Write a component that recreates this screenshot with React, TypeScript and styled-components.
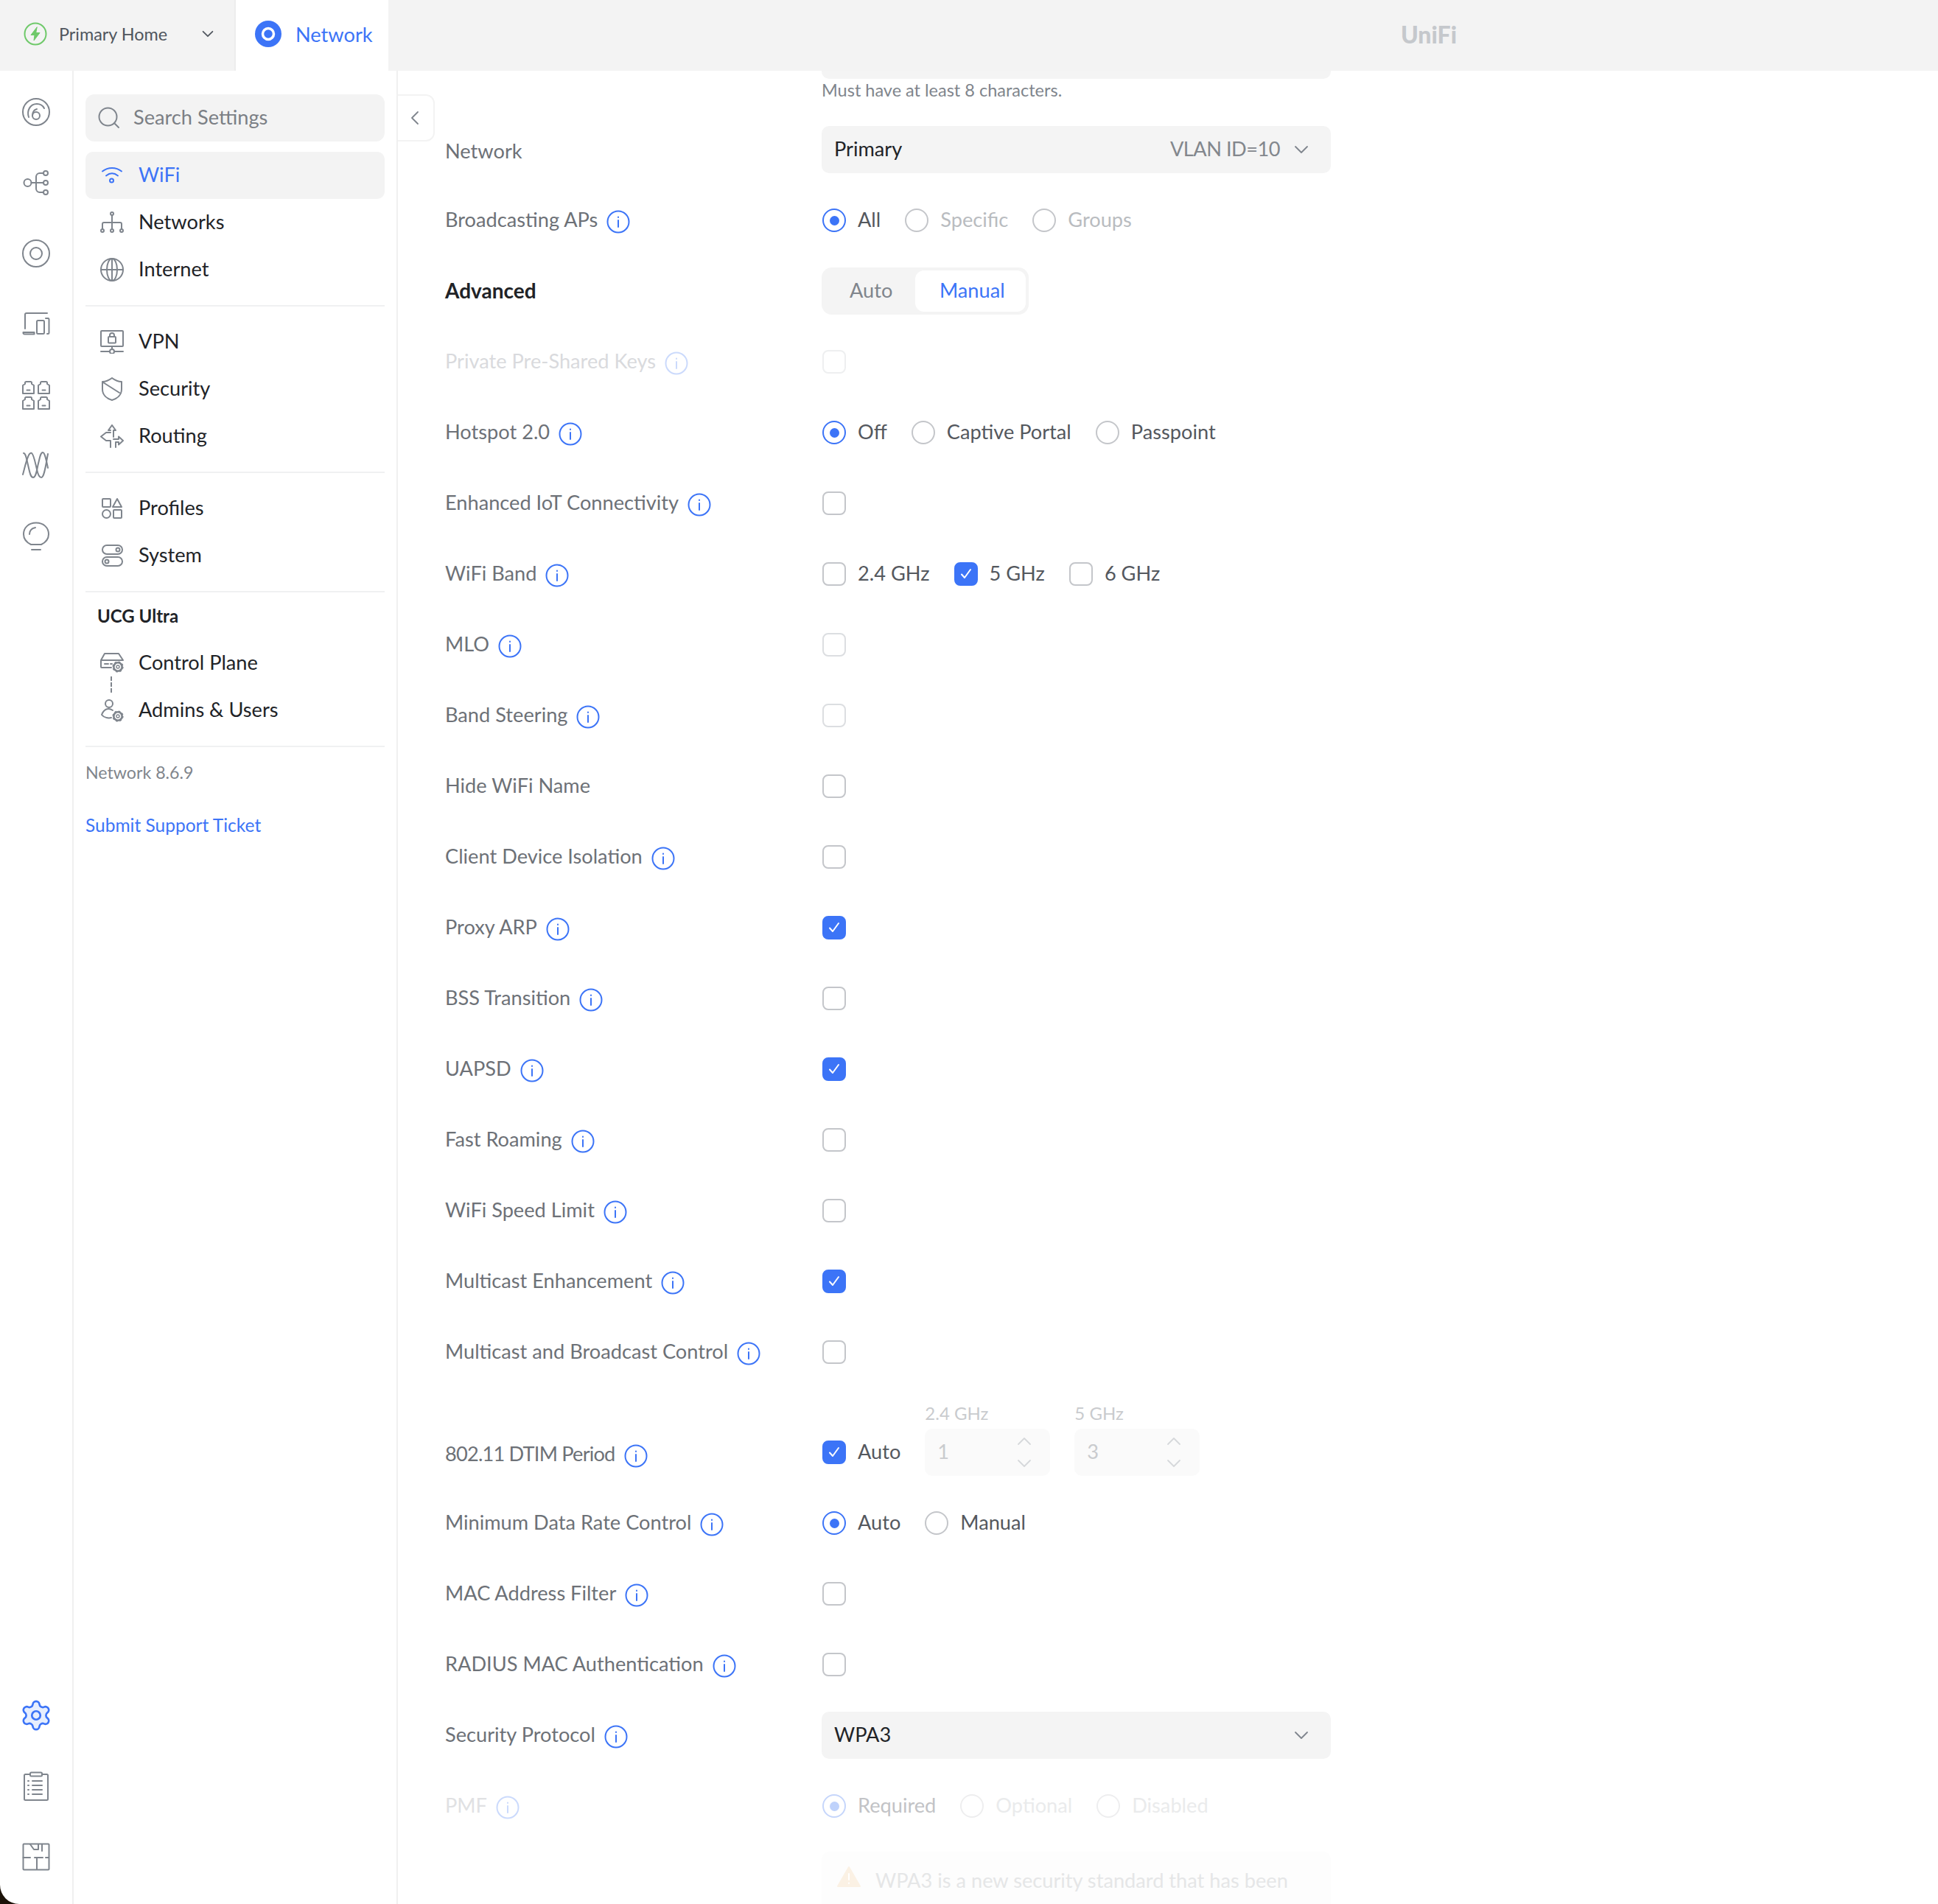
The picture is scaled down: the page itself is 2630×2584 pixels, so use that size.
import React from "react";
import styled, { createGlobalStyle, css } from "styled-components";
import { Settings } from "lucide-react";

const BLUE = "#3c74f7";
const ICON = "#7f858d";
const INK = "#212327";

const GlobalStyle = createGlobalStyle`
  html, body { margin: 0; padding: 0; background: #1c1208; }
  * { box-sizing: border-box; }
  body { font-family: Lato, "Liberation Sans", sans-serif; font-size: 27.2px; color: ${INK}; }
`;

const Page = styled.div`
  width: 2630px;
  height: 2584px;
  background: #fff;
  border-bottom-left-radius: 26px;
  overflow: hidden;
  display: flex;
  flex-direction: column;
`;

const TopBar = styled.header`
  height: 96px;
  flex: none;
  display: flex;
  align-items: stretch;
  background: #f3f3f3;
`;

const SiteTab = styled.div`
  width: 320px;
  display: flex;
  align-items: center;
  gap: 16px;
  padding: 0 28px 4px 32px;
  font-size: 23.4px;
  color: #50565e;
  border-right: 2px solid #ededed;
`;

const AppTab = styled.div`
  width: 207px;
  display: flex;
  align-items: center;
  gap: 19px;
  padding: 0 0 4px 26px;
  background: #fff;
  color: ${BLUE};
`;

const Logo = styled.div`
  margin-left: 1374px;
  align-self: center;
  padding-bottom: 4px;
  font-size: 32px;
  font-weight: 900;
  color: #c5c8cc;
`;

const Body = styled.div`
  flex: 1;
  min-height: 0;
  display: flex;
`;

const Rail = styled.nav`
  width: 100px;
  flex: none;
  display: flex;
  flex-direction: column;
  justify-content: space-between;
  padding: 8px 0 16px;
  border-right: 2px solid #f0f0f0;
`;

const RailButton = styled.div`
  height: 96px;
  display: flex;
  align-items: center;
  justify-content: center;
`;

const Sidebar = styled.aside`
  width: 440px;
  flex: none;
  padding: 32px 16px 0;
  border-right: 2px solid #f0f0f0;
`;

const SearchBox = styled.div`
  height: 64px;
  margin-bottom: 14px;
  display: flex;
  align-items: center;
  gap: 18px;
  padding-left: 17px;
  border-radius: 12px;
  background: #f3f3f3;
  color: #7b7f85;
`;

const NavItem = styled.div<{ $active?: boolean }>`
  position: relative;
  height: 64px;
  display: flex;
  align-items: center;
  gap: 20px;
  padding-left: 20px;
  border-radius: 10px;
  ${(p) =>
    p.$active &&
    css`
      background: #f3f3f3;
      color: ${BLUE};
    `}
`;

const NavText = styled.span`
  margin-top: -3px;
`;

const LinkedItem = styled(NavItem)`
  &::after {
    content: "";
    position: absolute;
    left: 34px;
    top: 50px;
    height: 22px;
    border-left: 2px dashed ${ICON};
  }
`;

const NavDivider = styled.div`
  height: 2px;
  margin: 16px 0;
  background: #f0f1f2;
`;

const NavHeading = styled.div`
  height: 64px;
  margin-top: -16px;
  padding: 0 0 2px 16px;
  display: flex;
  align-items: center;
  font-size: 24px;
  font-weight: 700;
`;

const Version = styled.div`
  margin-top: 18px;
  line-height: 32px;
  font-size: 23.2px;
  color: #80858c;
`;

const SupportLink = styled.a`
  display: block;
  margin-top: 40px;
  line-height: 32px;
  font-size: 24.5px;
  color: ${BLUE};
`;

const Main = styled.main`
  position: relative;
  flex: 1;
  min-width: 0;
  padding-left: 64px;
  overflow: hidden;
`;

const CollapseTab = styled.div`
  position: absolute;
  left: -2px;
  top: 32px;
  width: 52px;
  height: 64px;
  display: flex;
  align-items: center;
  justify-content: center;
  background: #fff;
  border: 2px solid #f3f3f3;
  border-left: 0;
  border-radius: 0 12px 12px 0;
  color: ${ICON};
`;

const PasswordEnd = styled.div`
  width: 691px;
  height: 11px;
  margin-left: 511px;
  background: #f4f4f4;
  border-radius: 0 0 10px 10px;
`;

const Hint = styled.div`
  height: 48px;
  margin-left: 511px;
  line-height: 30px;
  font-size: 23.5px;
  color: #80858c;
`;

type Tone = "normal" | "strong" | "muted" | "faint";

const toneColor: Record<Tone, string> = {
  normal: "#6d7177",
  strong: INK,
  muted: "#d9dadd",
  faint: "#e0e1e3",
};

const Row = styled.div<{ $tall?: boolean }>`
  display: flex;
  align-items: ${(p) => (p.$tall ? "flex-end" : "center")};
  height: ${(p) => (p.$tall ? 136 : 96)}px;
  padding-bottom: ${(p) => (p.$tall ? 16 : 0)}px;
`;

const LabelCell = styled.div<{ $tone?: Tone; $low?: boolean; $tight?: boolean }>`
  width: 511px;
  flex: none;
  display: flex;
  align-items: center;
  gap: 12px;
  height: 64px;
  padding: ${(p) => (p.$low ? "3px 0 0" : "0 0 3px")};
  color: ${(p) => toneColor[p.$tone || "normal"]};
  font-size: ${(p) => (p.$tone === "strong" ? 28 : 27.2)}px;
  font-weight: ${(p) => (p.$tone === "strong" ? 700 : 400)};
  letter-spacing: ${(p) => (p.$tight ? "-0.8px" : "normal")};
`;

const InfoMark = styled.svg<{ $faded?: boolean }>`
  width: 32px;
  height: 32px;
  margin-top: 7px;
  flex: none;
  fill: none;
  stroke: ${(p) => (p.$faded ? "#cbdafc" : BLUE)};
  stroke-width: 2;
  stroke-linecap: round;
`;

const ChoiceGroup = styled.div`
  display: flex;
  align-items: center;
  gap: 32px;
  height: 64px;
`;

const Choice = styled.label`
  display: flex;
  align-items: center;
  gap: 16px;
`;

const ChoiceText = styled.span<{ $color?: string }>`
  margin-top: -3px;
  color: ${(p) => p.$color || "#54585e"};
`;

const Radio = styled.span<{ $on?: boolean; $border?: string; $dot?: string }>`
  width: 32px;
  height: 32px;
  margin-left: 1px;
  flex: none;
  display: flex;
  align-items: center;
  justify-content: center;
  border-radius: 50%;
  border: 2px solid ${(p) => p.$border || (p.$on ? BLUE : "#c4c6ca")};
  ${(p) =>
    p.$on &&
    css`
      &::after {
        content: "";
        width: 13px;
        height: 13px;
        border-radius: 50%;
        background: ${p.$dot || BLUE};
      }
    `}
`;

const Box = styled.span<{ $on?: boolean; $border?: string }>`
  width: 32px;
  height: 32px;
  margin-left: 1px;
  flex: none;
  display: flex;
  align-items: center;
  justify-content: center;
  border-radius: 8px;
  border: 2px solid ${(p) => (p.$on ? BLUE : p.$border || "#c4c6ca")};
  background: ${(p) => (p.$on ? BLUE : "transparent")};
  color: #fff;
`;

const SelectBox = styled.div`
  width: 691px;
  height: 64px;
  display: flex;
  align-items: center;
  padding: 0 30px 0 17px;
  border-radius: 10px;
  background: #f4f4f4;
`;

const SelectText = styled.span`
  margin-top: -3px;
`;

const SelectHint = styled.span`
  margin: -3px 19px 0 auto;
  letter-spacing: -0.5px;
  color: #83878d;
`;

const Caret = styled.svg<{ $up?: boolean; $color?: string; $push?: boolean; $small?: boolean }>`
  width: ${(p) => (p.$small ? 16 : 20)}px;
  height: ${(p) => (p.$small ? 10 : 12)}px;
  flex: none;
  fill: none;
  stroke: ${(p) => p.$color || ICON};
  stroke-width: ${(p) => (p.$small ? 2.2 : 1.8)};
  stroke-linecap: round;
  stroke-linejoin: round;
  ${(p) => p.$up && "transform: rotate(180deg);"}
  ${(p) => p.$push && "margin-left: auto;"}
`;

const BackCaret = styled(Caret)`
  transform: rotate(90deg);
`;

const Segmented = styled.div`
  width: 281px;
  height: 64px;
  display: flex;
  padding: 4px;
  border-radius: 14px;
  background: #f4f4f4;
`;

const SegmentOff = styled.div`
  width: 123px;
  display: flex;
  align-items: center;
  padding: 0 0 3px 34px;
  color: #80858c;
`;

const SegmentOn = styled.div`
  width: 150px;
  display: flex;
  align-items: center;
  padding: 0 0 3px 33px;
  border-radius: 12px;
  background: #fff;
  color: ${BLUE};
`;

const StepperColumn = styled.div`
  position: relative;
  width: 170px;
  height: 64px;
  margin-left: 1px;
`;

const StepperLabel = styled.div`
  position: absolute;
  left: 0;
  top: -37px;
  font-size: 24px;
  line-height: 32px;
  color: #c9cbce;
`;

const Stepper = styled.div`
  height: 64px;
  display: flex;
  align-items: center;
  justify-content: space-between;
  padding: 0 25px 3px 17px;
  border-radius: 10px;
  background: #fafafa;
  color: #c9cbce;
`;

const StepperArrows = styled.div`
  display: flex;
  flex-direction: column;
  gap: 18px;
  margin-top: 3px;
`;

const WarningBox = styled.div`
  width: 691px;
  margin: 14px 0 0 511px;
  display: flex;
  gap: 19px;
  padding: 17px 18px 0 20px;
  background: #fdfdfd;
  border-radius: 10px;
  line-height: 44px;
  color: #e5e6e7;
`;

const Glyph = styled.svg<{ $size: number; $color?: string }>`
  width: ${(p) => p.$size}px;
  height: ${(p) => p.$size}px;
  flex: none;
  fill: none;
  stroke: ${(p) => p.$color || ICON};
  stroke-width: 2;
  stroke-linecap: round;
  stroke-linejoin: round;
`;

const Down = (p: { color?: string; push?: boolean; small?: boolean }) => (
  <Caret viewBox="0 0 20 12" $color={p.color} $push={p.push} $small={p.small}>
    <path d="M2 2l8 8 8-8" />
  </Caret>
);

const Info = ({ faded }: { faded?: boolean }) => (
  <InfoMark viewBox="0 0 32 32" $faded={faded}>
    <circle cx="16" cy="16" r="14.5" />
    <path d="M16 14v9M16 9.5v.4" />
  </InfoMark>
);

const Tick = () => (
  <Glyph viewBox="0 0 20 20" $size={20} $color="#fff">
    <path d="M4 10.500l4 4.500 8-11" />
  </Glyph>
);

const SmallGear = ({ x, y }: { x: number; y: number }) => (
  <g transform={`translate(${x} ${y})`}>
    <circle r="6" fill="#fff" />
    <circle r="6.400" strokeWidth="2.400" strokeDasharray="2.500 2.500" strokeLinecap="butt" />
    <circle r="5" strokeWidth="1.200" />
    <circle r="2" strokeWidth="1.400" />
  </g>
);

const PortCell = ({ x, y }: { x: number; y: number }) => (
  <g transform={`translate(${x} ${y})`}>
    <path d="M1 17V6l3-2V2.500a1.500 1.500 0 0 1 1.500-1.500h6A1.500 1.500 0 0 1 13 2.500V4l3 2v11z" />
    <path d="M6.500 12.500h4" />
  </g>
);

const railTop = [
  <Glyph key="dash" viewBox="0 0 40 40" $size={40}>
    <circle cx="20" cy="20" r="18" />
    <path d="M10 27c-3-9 2-18 11-18 4 0 8 2 10 6" />
    <circle cx="20" cy="25" r="5" />
    <path d="M15 25c0-5 2-8 6-9" />
  </Glyph>,
  <Glyph key="topo" viewBox="0 0 40 40" $size={40}>
    <circle cx="8.500" cy="20" r="5" />
    <path d="M13.500 20H30M30 7h-5a5 5 0 0 0-5 5v16a5 5 0 0 0 5 5h5" />
    <circle cx="33" cy="7" r="3" />
    <circle cx="33" cy="20" r="3" />
    <circle cx="33" cy="33" r="3" />
  </Glyph>,
  <Glyph key="device" viewBox="0 0 40 40" $size={40}>
    <circle cx="20" cy="20" r="18" />
    <circle cx="20" cy="20" r="8" />
  </Glyph>,
  <Glyph key="clients" viewBox="0 0 40 40" $size={40}>
    <path d="M5 26V7a2 2 0 0 1 2-2h28" />
    <path d="M2.500 31h15v2.500h-13a2 2 0 0 1-2-2.500z" />
    <rect x="21" y="15" width="10" height="18" rx="1.500" />
    <path d="M33 12h3.500a1.500 1.500 0 0 1 1 1.500V31.500a1.500 1.500 0 0 1-1.500 1.500h-1" />
  </Glyph>,
  <Glyph key="ports" viewBox="0 0 40 40" $size={40}>
    <PortCell x={1} y={1} />
    <PortCell x={22} y={1} />
    <PortCell x={1} y={22} />
    <PortCell x={22} y={22} />
  </Glyph>,
  <Glyph key="waves" viewBox="0 0 40 40" $size={40}>
    <path d="M3 3c3 0 4 8 6 16s3 17 7 17 5-11 7-19 3-15 6-15 5 12 7 21" />
    <path d="M2 32c2-7 4-17 7-24 1-3 3-6 5-5 3 2 5 14 7 22 1 5 3 11 6 11 4 0 6-16 9-32" />
  </Glyph>,
  <Glyph key="bulb" viewBox="0 0 40 40" $size={40}>
    <path d="M13 31C7 28 3 23 3 17 3 8 10 1.500 20 1.500S37 8 37 17c0 6-4 11-10 14z" />
    <path d="M14 38h12M11 17c0-5 3-8 8-9" />
  </Glyph>,
];

const railBottom = [
  <Settings key="gear" size={46} color={BLUE} fill="#e6eefe" strokeWidth={1.4} />,
  <Glyph key="log" viewBox="0 0 40 40" $size={40}>
    <rect x="4" y="4" width="32" height="35" rx="1.500" />
    <rect x="12" y="1.500" width="16" height="5" rx="1.500" fill="#fff" />
    <path d="M15 13h13M15 19h13M15 25h13M15 31h13M9 13h1M9 19h1M9 25h1M9 31h1" />
  </Glyph>,
  <Glyph key="plan" viewBox="0 0 40 40" $size={40}>
    <rect x="2.500" y="2.500" width="35" height="35" rx="1" />
    <path d="M12 3l5 7h6V3M28 3v9M2.500 21H12M18 21h11M21 21v16M33 21h4" />
  </Glyph>,
];

const navIcons: Record<string, React.ReactNode> = {
  wifi: (
    <Glyph viewBox="0 0 32 32" $size={32} $color={BLUE}>
      <path d="M3 10.500c7.500-6 18.500-6 26 0M8 16.500c5-4 11-4 16 0" />
      <circle cx="15.500" cy="23" r="2.500" />
    </Glyph>
  ),
  networks: (
    <Glyph viewBox="0 0 32 32" $size={32}>
      <circle cx="16" cy="4" r="2" />
      <circle cx="3" cy="27" r="2" />
      <circle cx="16" cy="27" r="2" />
      <circle cx="29" cy="27" r="2" />
      <path d="M16 6v19M3 25v-7a2 2 0 0 1 2-2h22a2 2 0 0 1 2 2v7" />
    </Glyph>
  ),
  globe: (
    <Glyph viewBox="0 0 32 32" $size={32}>
      <circle cx="16" cy="16" r="15" />
      <ellipse cx="16" cy="16" rx="7" ry="15" />
      <path d="M1 16h30M16 1v30" />
    </Glyph>
  ),
  vpn: (
    <Glyph viewBox="0 0 32 32" $size={32}>
      <rect x="1" y="1" width="30" height="21" rx="1" />
      <rect x="11" y="9" width="10" height="8.500" rx="1" />
      <path d="M13 9V7a3 3 0 0 1 6 0v2M1 29h12M19 29h12M16 22v4" />
      <circle cx="16" cy="29" r="3" />
    </Glyph>
  ),
  shield: (
    <Glyph viewBox="0 0 32 32" $size={32}>
      <path d="M3 6c5 0 9-2 13-5 4 3 8 5 13 5v10c0 8-6 13-13 15C9 29 3 24 3 16z" />
      <path d="M4 7l22 14" />
    </Glyph>
  ),
  routing: (
    <Glyph viewBox="0 0 32 32" $size={32}>
      <path d="M11 8l5-7 5 7h-3v9M14 8h-3M14 11H8l-7 5.500L8 22h6v9M18 20h7v-3.500l6 5.500-6 5.500V24h-4v7" />
    </Glyph>
  ),
  profiles: (
    <Glyph viewBox="0 0 32 32" $size={32}>
      <rect x="3" y="3" width="11" height="11" rx="1" />
      <path d="M23 3l6 11H17z" />
      <circle cx="8.500" cy="23.500" r="5.500" />
      <rect x="18" y="18" width="11" height="11" rx="1" />
    </Glyph>
  ),
  system: (
    <Glyph viewBox="0 0 32 32" $size={32}>
      <rect x="3" y="2" width="27" height="12" rx="6" />
      <rect x="3" y="18" width="27" height="12" rx="6" />
      <circle cx="24" cy="8" r="2.500" />
      <circle cx="9" cy="24" r="2.500" />
    </Glyph>
  ),
  plane: (
    <Glyph viewBox="0 0 32 32" $size={32}>
      <path d="M1 12l5-9h19l6 9M15 22H2a1 1 0 0 1-1-1v-9h30" />
      <path d="M6 17h5M14 17h2" />
      <SmallGear x={24} y={21} />
    </Glyph>
  ),
  admins: (
    <Glyph viewBox="0 0 32 32" $size={32}>
      <circle cx="12" cy="7" r="5" />
      <path d="M17 16c-6-4-12-2-15 6 3 4 9 5 13 4" />
      <SmallGear x={24} y={24} />
    </Glyph>
  ),
};

const NavRow = ({ icon, text, active }: { icon: string; text: string; active?: boolean }) => (
  <NavItem $active={active}>
    {navIcons[icon]}
    <NavText>{text}</NavText>
  </NavItem>
);

const Field = ({
  label,
  info = true,
  tone,
  children,
  tall,
  fadedInfo,
  low,
  tight,
}: {
  label: string;
  info?: boolean;
  tone?: Tone;
  children?: React.ReactNode;
  tall?: boolean;
  fadedInfo?: boolean;
  low?: boolean;
  tight?: boolean;
}) => (
  <Row $tall={tall}>
    <LabelCell $tone={tone} $low={low} $tight={tight}>
      {label}
      {info && <Info faded={fadedInfo} />}
    </LabelCell>
    {children}
  </Row>
);

const Check = ({ on, border }: { on?: boolean; border?: string }) => (
  <Box $on={on} $border={border}>
    {on && <Tick />}
  </Box>
);

const checkRows: { label: string; info?: boolean; on?: boolean; border?: string }[] = [
  { label: "MLO", border: "#dcdee1" },
  { label: "Band Steering", border: "#dcdee1" },
  { label: "Hide WiFi Name", info: false },
  { label: "Client Device Isolation" },
  { label: "Proxy ARP", on: true },
  { label: "BSS Transition" },
  { label: "UAPSD", on: true },
  { label: "Fast Roaming" },
  { label: "WiFi Speed Limit" },
  { label: "Multicast Enhancement", on: true },
  { label: "Multicast and Broadcast Control" },
];

const Options = ({ items, on }: { items: string[]; on: string }) => (
  <ChoiceGroup>
    {items.map((t) => (
      <Choice key={t}>
        <Radio $on={t === on} />
        <ChoiceText>{t}</ChoiceText>
      </Choice>
    ))}
  </ChoiceGroup>
);

const Spin = ({ title, value }: { title: string; value: string }) => (
  <StepperColumn>
    <StepperLabel>{title}</StepperLabel>
    <Stepper>
      {value}
      <StepperArrows>
        <Caret viewBox="0 0 20 12" $up $color="#d6d8db">
          <path d="M2 2l8 8 8-8" />
        </Caret>
        <Down color="#d6d8db" />
      </StepperArrows>
    </Stepper>
  </StepperColumn>
);

export default function App() {
  return (
    <>
      <GlobalStyle />
      <Page>
        <TopBar>
          <SiteTab>
            <Glyph viewBox="0 0 32 32" $size={32} $color="#6fc96a">
              <circle cx="16" cy="16" r="14.500" />
              <path d="M18 7l-8 10.500h5L14 25l8-10.500h-5z" fill="#6fc96a" strokeWidth="1" />
            </Glyph>
            Primary Home
            <Down color="#50565e" push small />
          </SiteTab>
          <AppTab>
            <Glyph viewBox="0 0 36 36" $size={36} $color="#fff">
              <circle cx="18" cy="18" r="18" fill={BLUE} stroke="none" />
              <circle cx="18" cy="18" r="7.500" strokeWidth="3.500" />
            </Glyph>
            Network
          </AppTab>
          <Logo>UniFi</Logo>
        </TopBar>
        <Body>
          <Rail>
            <div>
              {railTop.map((icon, i) => (
                <RailButton key={i}>{icon}</RailButton>
              ))}
            </div>
            <div>
              {railBottom.map((icon, i) => (
                <RailButton key={i}>{icon}</RailButton>
              ))}
            </div>
          </Rail>
          <Sidebar>
            <SearchBox>
              <Glyph viewBox="0 0 30 30" $size={30}>
                <circle cx="13.500" cy="13.500" r="12" />
                <path d="M23 23l5 5" />
              </Glyph>
              <NavText>Search Settings</NavText>
            </SearchBox>
            <NavRow icon="wifi" text="WiFi" active />
            <NavRow icon="networks" text="Networks" />
            <NavRow icon="globe" text="Internet" />
            <NavDivider />
            <NavRow icon="vpn" text="VPN" />
            <NavRow icon="shield" text="Security" />
            <NavRow icon="routing" text="Routing" />
            <NavDivider />
            <NavRow icon="profiles" text="Profiles" />
            <NavRow icon="system" text="System" />
            <NavDivider />
            <NavHeading>UCG Ultra</NavHeading>
            <LinkedItem>
              {navIcons.plane}
              <NavText>Control Plane</NavText>
            </LinkedItem>
            <NavRow icon="admins" text="Admins & Users" />
            <NavDivider />
            <Version>Network 8.6.9</Version>
            <SupportLink>Submit Support Ticket</SupportLink>
          </Sidebar>
          <Main>
            <CollapseTab>
              <BackCaret viewBox="0 0 20 12">
                <path d="M2 2l8 8 8-8" />
              </BackCaret>
            </CollapseTab>
            <PasswordEnd />
            <Hint>Must have at least 8 characters.</Hint>
            <Field label="Network" info={false} low>
              <SelectBox>
                <SelectText>Primary</SelectText>
                <SelectHint>VLAN ID=10</SelectHint>
                <Down />
              </SelectBox>
            </Field>
            <Field label="Broadcasting APs">
              <ChoiceGroup>
                <Choice>
                  <Radio $on />
                  <ChoiceText>All</ChoiceText>
                </Choice>
                <Choice>
                  <Radio />
                  <ChoiceText $color="#b9bcc0">Specific</ChoiceText>
                </Choice>
                <Choice>
                  <Radio />
                  <ChoiceText $color="#b9bcc0">Groups</ChoiceText>
                </Choice>
              </ChoiceGroup>
            </Field>
            <Field label="Advanced" info={false} tone="strong">
              <Segmented>
                <SegmentOff>Auto</SegmentOff>
                <SegmentOn>Manual</SegmentOn>
              </Segmented>
            </Field>
            <Field label="Private Pre-Shared Keys" tone="muted" fadedInfo>
              <Check border="#eeeff0" />
            </Field>
            <Field label="Hotspot 2.0">
              <Options items={["Off", "Captive Portal", "Passpoint"]} on="Off" />
            </Field>
            <Field label="Enhanced IoT Connectivity">
              <Check />
            </Field>
            <Field label="WiFi Band">
              <ChoiceGroup>
                <Choice>
                  <Check />
                  <ChoiceText>2.4 GHz</ChoiceText>
                </Choice>
                <Choice>
                  <Check on />
                  <ChoiceText>5 GHz</ChoiceText>
                </Choice>
                <Choice>
                  <Check />
                  <ChoiceText>6 GHz</ChoiceText>
                </Choice>
              </ChoiceGroup>
            </Field>
            {checkRows.map((r) => (
              <Field key={r.label} label={r.label} info={r.info}>
                <Check on={r.on} border={r.border} />
              </Field>
            ))}
            <Field label="802.11 DTIM Period" tall low tight>
              <ChoiceGroup>
                <Choice>
                  <Check on />
                  <ChoiceText>Auto</ChoiceText>
                </Choice>
                <Spin title="2.4 GHz" value="1" />
                <Spin title="5 GHz" value="3" />
              </ChoiceGroup>
            </Field>
            <Field label="Minimum Data Rate Control">
              <Options items={["Auto", "Manual"]} on="Auto" />
            </Field>
            <Field label="MAC Address Filter">
              <Check />
            </Field>
            <Field label="RADIUS MAC Authentication">
              <Check />
            </Field>
            <Field label="Security Protocol">
              <SelectBox>
                <SelectText>WPA3</SelectText>
                <Down push />
              </SelectBox>
            </Field>
            <Field label="PMF" tone="faint" fadedInfo>
              <ChoiceGroup>
                <Choice>
                  <Radio $on $border="#c6d6fb" $dot="#bfd2fb" />
                  <ChoiceText $color="#c2c3c6">Required</ChoiceText>
                </Choice>
                <Choice>
                  <Radio $border="#eeeeef" />
                  <ChoiceText $color="#eaebec">Optional</ChoiceText>
                </Choice>
                <Choice>
                  <Radio $border="#eeeeef" />
                  <ChoiceText $color="#eaebec">Disabled</ChoiceText>
                </Choice>
              </ChoiceGroup>
            </Field>
            <WarningBox>
              <Glyph viewBox="0 0 34 30" $size={34} $color="#fbf1e4">
                <path d="M17 2L2 28h30z" fill="#fbf1e4" />
                <path d="M17 11v8M17 23.500v.5" stroke="#fff" />
              </Glyph>
              <span>WPA3 is a new security standard that has been known to cause connectivity issues with certain</span>
            </WarningBox>
          </Main>
        </Body>
      </Page>
    </>
  );
}
